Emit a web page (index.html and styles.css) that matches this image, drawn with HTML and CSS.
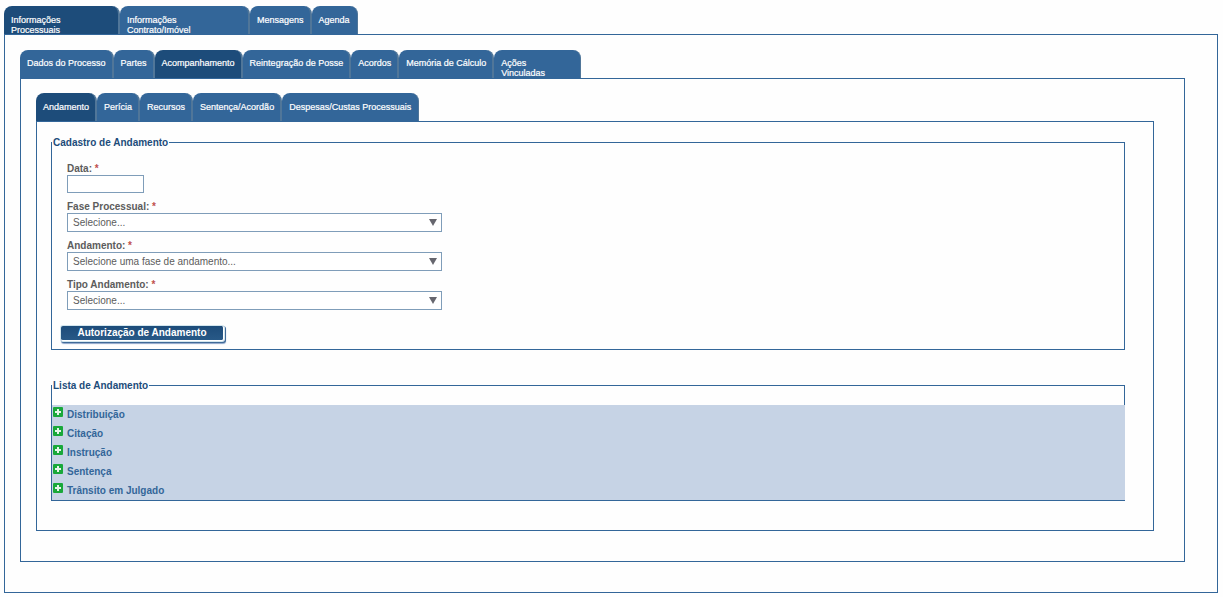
FILE: index.html
```html
<!DOCTYPE html>
<html lang="pt-BR">
<head>
<meta charset="utf-8">
<meta name="viewport" content="width=device-width, initial-scale=1">
<title>Acompanhamento</title>
<link rel="stylesheet" href="styles.css">
</head>
<body>

<nav class="tabs">
    <a href="#" class="active wide">Informações<br>Processuais</a>
    <a href="#" class="wider">Informações<br>Contrato/Imóvel</a>
    <a href="#">Mensagens</a>
    <a href="#">Agenda</a>
</nav>
<div class="panel outer">

    <nav class="tabs">
        <a href="#">Dados do Processo</a>
        <a href="#">Partes</a>
        <a href="#" class="active">Acompanhamento</a>
        <a href="#">Reintegração de Posse</a>
        <a href="#">Acordos</a>
        <a href="#">Memória de Cálculo</a>
        <a href="#" class="narrow">Ações<br>Vinculadas</a>
    </nav>
    <div class="panel">

        <nav class="tabs">
            <a href="#" class="active">Andamento</a>
            <a href="#">Perícia</a>
            <a href="#">Recursos</a>
            <a href="#">Sentença/Acordão</a>
            <a href="#">Despesas/Custas Processuais</a>
        </nav>
        <div class="panel inner">

            <form>
                <fieldset class="cadastro">
                    <legend>Cadastro de Andamento</legend>

                    <div class="field">
                        <label for="data">Data: <span class="req">*</span></label>
                        <input type="text" id="data" name="data">
                    </div>

                    <div class="field">
                        <label for="fase">Fase Processual: <span class="req">*</span></label>
                        <div class="select">
                            <select id="fase" name="fase"><option>Selecione...</option></select>
                        </div>
                    </div>

                    <div class="field">
                        <label for="andamento">Andamento: <span class="req">*</span></label>
                        <div class="select">
                            <select id="andamento" name="andamento"><option>Selecione uma fase de andamento...</option></select>
                        </div>
                    </div>

                    <div class="field">
                        <label for="tipo">Tipo Andamento: <span class="req">*</span></label>
                        <div class="select">
                            <select id="tipo" name="tipo"><option>Selecione...</option></select>
                        </div>
                    </div>

                    <button type="button" class="btn">Autorização de Andamento</button>
                </fieldset>
            </form>

            <fieldset class="lista">
                <legend>Lista de Andamento</legend>
                <ul>
                    <li><a href="#"><svg class="plus" viewBox="0 0 10 10"><rect width="10" height="10" rx="1"/><path d="M5 2v6M2 5h6"/></svg>Distribuição</a></li>
                    <li><a href="#"><svg class="plus" viewBox="0 0 10 10"><rect width="10" height="10" rx="1"/><path d="M5 2v6M2 5h6"/></svg>Citação</a></li>
                    <li><a href="#"><svg class="plus" viewBox="0 0 10 10"><rect width="10" height="10" rx="1"/><path d="M5 2v6M2 5h6"/></svg>Instrução</a></li>
                    <li><a href="#"><svg class="plus" viewBox="0 0 10 10"><rect width="10" height="10" rx="1"/><path d="M5 2v6M2 5h6"/></svg>Sentença</a></li>
                    <li><a href="#"><svg class="plus" viewBox="0 0 10 10"><rect width="10" height="10" rx="1"/><path d="M5 2v6M2 5h6"/></svg>Trânsito em Julgado</a></li>
                </ul>
            </fieldset>

        </div>
    </div>
</div>

</body>
</html>
```

FILE: styles.css
```css
* {
  box-sizing: border-box;
}

body {
  margin: 6px 5px 4px 4px;
  background: #fefefe;
  color: #5c5c5c;
  font-family: "Liberation Sans", Arial, sans-serif;
  font-size: 10px;
}

/* Tabs */
.tabs {
  display: flex;
}

.tabs a {
  height: 28px;
  padding: 9px 6px 0 7px;
  border-right: 2px solid #507699;
  border-radius: 8px 8px 0 0;
  background: #336699;
  color: #fff;
  font-size: 9px;
  line-height: 10px;
  text-decoration: none;
  white-space: nowrap;
  overflow: hidden;
  -webkit-text-stroke: 0.2px #fff;
}

.tabs a:last-child {
  padding-right: 7px;
  border-right-width: 1px;
}

.tabs a.active {
  background: #1d4c7a;
}

.tabs .wide {
  min-width: 116px;
}

.tabs .wider {
  min-width: 130px;
}

.tabs .narrow {
  min-width: 87px;
}

/* Bordered box under each row of tabs */
.panel {
  padding: 14px 30px 30px 15px;
  border: 1px solid #336699;
}

.outer {
  padding: 15px 32px 30px 15px;
}

.outer > .tabs a {
  padding-top: 8px;
}

.inner {
  padding: 15px 28px 29px 14px;
}

/* Form */
fieldset {
  min-width: 0;
  margin: 0;
  padding: 0;
  border: 1px solid #336699;
}

legend {
  padding: 0 1px;
  color: #1d4c7a;
  font-weight: bold;
  line-height: 11px;
}

.cadastro {
  padding: 15px 0 8px;
}

.field {
  margin: 0 15px 8px;
}

.field label {
  display: block;
  font-weight: bold;
  line-height: 12px;
}

.req {
  color: #c0504d;
}

input,
select {
  display: block;
  height: 18px;
  padding: 0 5px;
  border: 1px solid #7f9db9;
  border-radius: 0;
  background: #fff;
  color: #5c5c5c;
  font-family: inherit;
  font-size: 10px;
}

input {
  width: 77px;
}

.select {
  position: relative;
  max-width: 375px;
}

.select select {
  width: 100%;
  height: 19px;
  appearance: none;
}

.select:after {
  position: absolute;
  top: 6px;
  right: 5px;
  border: solid transparent;
  border-width: 7px 4px 0;
  border-top-color: #66666e;
  content: "";
  pointer-events: none;
}

.btn {
  display: block;
  width: 163px;
  height: 15px;
  margin: 16px 0 0 9px;
  padding: 0;
  border: 1px solid #fff;
  border-width: 0 1px 1px 0;
  border-radius: 2px;
  background: linear-gradient(#1d4c7a, #285987);
  box-shadow: 0 0 0 1px #d3e6ee, 1px 1px 0 1px #3f6a98, 1px 2px 1px 1px #8ba4c8;
  color: #fff;
  font-family: inherit;
  font-size: 10px;
  font-weight: bold;
  line-height: 12px;
}

/* List */
.lista {
  margin-top: 30px;
  padding-top: 14px;
}

.lista ul {
  margin: 0 -1px 0 0;
  padding: 0;
  background: #c6d3e5;
  list-style: none;
}

.lista li a {
  display: flex;
  gap: 4px;
  height: 19px;
  padding-left: 1px;
  color: #336699;
  font-weight: bold;
  line-height: 20px;
  text-decoration: none;
}

.plus {
  width: 10px;
  height: 10px;
  margin-top: 2px;
  fill: #19a83a;
  stroke: #e6f5e9;
  stroke-width: 2;
}

.plus rect {
  stroke: none;
}
```
